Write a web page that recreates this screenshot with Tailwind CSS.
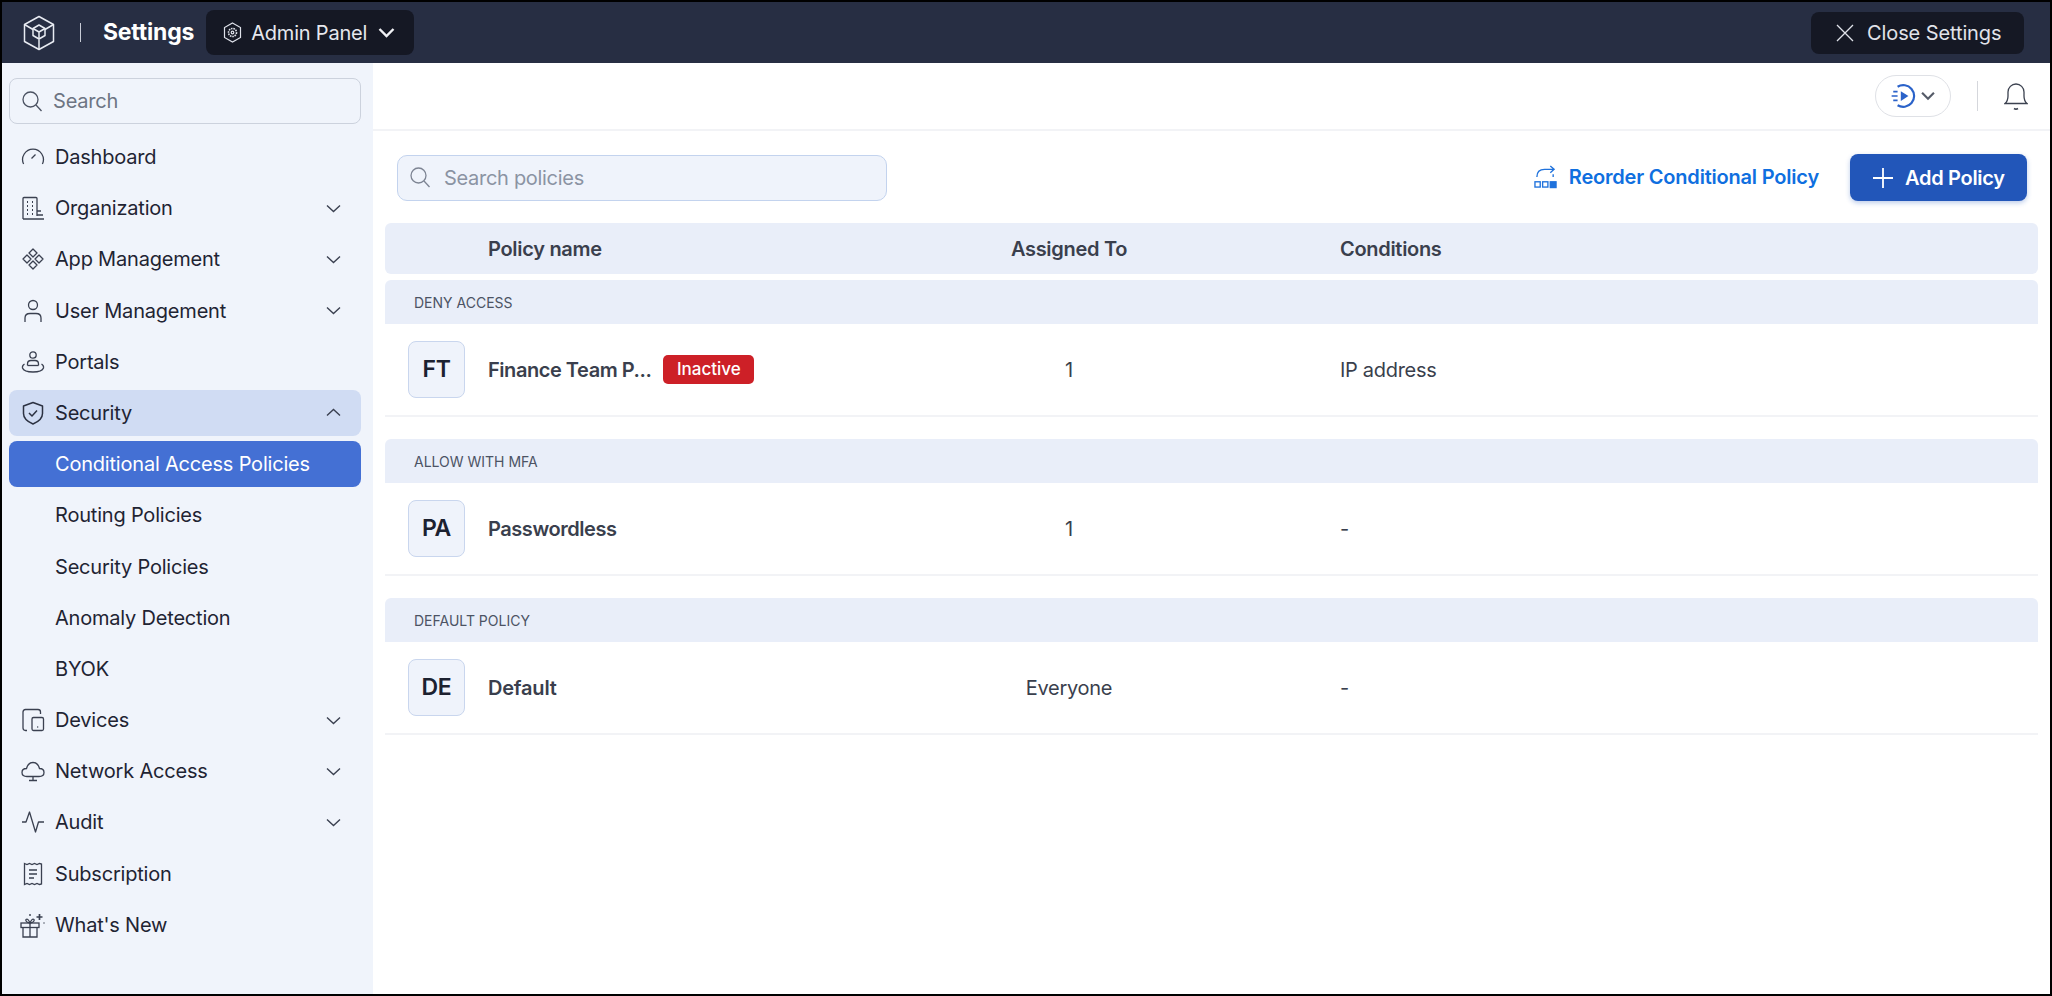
<!DOCTYPE html>
<html lang="en">
<head>
  <meta charset="UTF-8" />
  <title>Settings - Conditional Access Policies</title>
  <script src="https://cdn.jsdelivr.net/npm/@tailwindcss/browser@4"></script>
</head>
<body class="bg-black font-['Inter',sans-serif]">
  <div class="w-[2052px] h-[996px] border-2 border-black bg-white flex flex-col overflow-hidden">

    <!-- top bar -->
    <header class="h-[61px] shrink-0 bg-[#272e43] flex items-center text-white">
      <svg class="ml-[20px] w-[34px] h-[36px]" viewBox="0 0 34 36" fill="none" stroke="#e8ebf2" stroke-width="1.5" stroke-linejoin="round">
        <path d="M17 1.5 31.5 9.5V26.5L17 34.5 2.5 26.5V9.5Z"/>
        <path d="M2.5 9.5 11 14.5M31.5 9.5 23 14.5M17 34.5V24.5"/>
        <path d="M17 10 23 13.5V20.5L17 24 11 20.5V13.5Z"/>
        <path d="M11 13.5 17 17 23 13.5M17 17V24"/>
      </svg>
      <div class="ml-[24px] w-px h-[19px] bg-[#c8ccd6]"></div>
      <span class="ml-[22px] text-[23px] font-bold tracking-[-0.2px]">Settings</span>
      <button class="ml-[12px] w-[208px] h-[45px] rounded-[8px] bg-[#151824] flex items-center pl-[17px] text-[#e6e8ee]">
        <svg class="w-[19px] h-[21px]" viewBox="0 0 19 21" fill="none" stroke="#dfe2ea" stroke-width="1.2">
          <path d="M9.5 1 17.5 5.5V15.5L9.5 20 1.5 15.5V5.5Z"/>
          <circle cx="9.5" cy="10.5" r="4" stroke-dasharray="1.6 .8" stroke-width="1.6"/>
          <circle cx="9.5" cy="10.5" r="1.3"/>
        </svg>
        <span class="ml-[9px] text-[20px] tracking-[-0.2px]">Admin Panel</span>
        <svg class="ml-[11px] w-[17px] h-[11px]" viewBox="0 0 17 11" fill="none" stroke="#f0f1f5" stroke-width="2.4"><path d="M1.5 2 8.5 9 15.5 2"/></svg>
      </button>
      <button class="ml-auto mr-[26px] w-[213px] h-[42px] rounded-[8px] bg-[#151824] flex items-center pl-[25px] text-[#e1e3ea]">
        <svg class="w-[18px] h-[18px]" viewBox="0 0 18 18" fill="none" stroke="#e1e3ea" stroke-width="1.3"><path d="M1 1 17 17M17 1 1 17"/></svg>
        <span class="ml-[13px] text-[20px] tracking-[-0.1px]">Close Settings</span>
      </button>
    </header>

    <div class="flex-1 flex min-h-0">

      <!-- sidebar -->
      <aside class="w-[371px] shrink-0 bg-[#f0f4fb] pl-[7px] pr-[12px] pt-[15px]">
        <div class="h-[46px] rounded-[8px] border border-[#ccd2dd] flex items-center pl-[12px] text-[#6d7483] text-[20px] tracking-[-0.2px]">
          <svg class="w-[20px] h-[21px]" viewBox="0 0 20 21" fill="none" stroke="#4b5262" stroke-width="1.3"><circle cx="8.5" cy="8.5" r="7.5"/><path d="M14 14 19.5 20"/></svg>
          <span class="ml-[11px]">Search</span>
        </div>

        <nav class="mt-[10px] text-[20px] tracking-[-0.2px] text-[#1f2433]">
          <a class="h-[46px] mb-[5.2px] flex items-center rounded-[8px]">
            <svg class="ml-[12px] w-[24px] h-[24px] shrink-0" viewBox="0 0 24 24" fill="none" stroke="#3a4050" stroke-width="1.3"><path d="M2.6 19A10.4 10.4 0 1 1 21.4 19"/><path d="M10.5 13.5 14.5 9.5"/></svg>
            <span class="ml-[10px]">Dashboard</span>
          </a>
          <a class="h-[46px] mb-[5.2px] flex items-center rounded-[8px]">
            <svg class="ml-[12px] w-[24px] h-[24px] shrink-0" viewBox="0 0 24 24" fill="none" stroke="#3a4050" stroke-width="1.3"><path d="M2 23V2.5Q2 1.5 3 1.5H15Q16 1.5 16 2.5V20"/><path d="M2 23H23M16 15H20M16 19H22"/><path d="M6 6H7M11 6H12M6 10H7M11 10H12M6 14H7M11 14H12M6 18H7M11 18H12" stroke-width="1.8"/></svg>
            <span class="ml-[10px]">Organization</span>
            <svg class="ml-auto mr-[20px] w-[15px] h-[9px]" viewBox="0 0 15 9" fill="none" stroke="#3a4050" stroke-width="1.4"><path d="M1 1.5 7.5 7.5 14 1.5"/></svg>
          </a>
          <a class="h-[46px] mb-[5.2px] flex items-center rounded-[8px]">
            <svg class="ml-[12px] w-[24px] h-[24px] shrink-0" viewBox="0 0 24 24" fill="none" stroke="#3a4050" stroke-width="1.3" stroke-linejoin="round"><path d="M12 2 16 6 12 10 8 6Z"/><path d="M12 14 16 18 12 22 8 18Z"/><path d="M6 8 10 12 6 16 2 12Z"/><path d="M18 8 22 12 18 16 14 12Z"/></svg>
            <span class="ml-[10px]">App Management</span>
            <svg class="ml-auto mr-[20px] w-[15px] h-[9px]" viewBox="0 0 15 9" fill="none" stroke="#3a4050" stroke-width="1.4"><path d="M1 1.5 7.5 7.5 14 1.5"/></svg>
          </a>
          <a class="h-[46px] mb-[5.2px] flex items-center rounded-[8px]">
            <svg class="ml-[12px] w-[24px] h-[24px] shrink-0" viewBox="0 0 24 24" fill="none" stroke="#3a4050" stroke-width="1.3"><circle cx="12" cy="6" r="4.5"/><path d="M4 23V19Q4 14.5 9 14.5H15Q20 14.5 20 19V23"/></svg>
            <span class="ml-[10px]">User Management</span>
            <svg class="ml-auto mr-[20px] w-[15px] h-[9px]" viewBox="0 0 15 9" fill="none" stroke="#3a4050" stroke-width="1.4"><path d="M1 1.5 7.5 7.5 14 1.5"/></svg>
          </a>
          <a class="h-[46px] mb-[5.2px] flex items-center rounded-[8px]">
            <svg class="ml-[12px] w-[24px] h-[24px] shrink-0" viewBox="0 0 24 24" fill="none" stroke="#3a4050" stroke-width="1.3"><circle cx="12" cy="5" r="3.2"/><path d="M6.5 15.5V14Q6.5 10.5 10 10.5H14Q17.5 10.5 17.5 14V15.5"/><path d="M6.5 15.5H17.5"/><path d="M3.5 14Q1 15.5 1.5 18 3 22 12 22 21 22 22.5 18 23 15.5 20.5 14"/></svg>
            <span class="ml-[10px]">Portals</span>
          </a>
          <a class="h-[46px] mb-[5.2px] flex items-center rounded-[8px] bg-[#d0dcf3]">
            <svg class="ml-[12px] w-[24px] h-[24px] shrink-0" viewBox="0 0 24 24" fill="none" stroke="#2c3242" stroke-width="1.5" stroke-linejoin="round"><path d="M12 1.5 21.5 5V12.5Q21.5 19 12 23 2.5 19 2.5 12.5V5Z"/><path d="M8 12 11 15 16 9.5"/></svg>
            <span class="ml-[10px]">Security</span>
            <svg class="ml-auto mr-[20px] w-[15px] h-[9px]" viewBox="0 0 15 9" fill="none" stroke="#3a4050" stroke-width="1.4"><path d="M1 7.5 7.5 1.5 14 7.5"/></svg>
          </a>
          <a class="h-[46px] mb-[5.2px] flex items-center rounded-[8px] bg-[#4470d4] text-white pl-[46px]">Conditional Access Policies</a>
          <a class="h-[46px] mb-[5.2px] flex items-center rounded-[8px] pl-[46px]">Routing Policies</a>
          <a class="h-[46px] mb-[5.2px] flex items-center rounded-[8px] pl-[46px]">Security Policies</a>
          <a class="h-[46px] mb-[5.2px] flex items-center rounded-[8px] pl-[46px]">Anomaly Detection</a>
          <a class="h-[46px] mb-[5.2px] flex items-center rounded-[8px] pl-[46px]">BYOK</a>
          <a class="h-[46px] mb-[5.2px] flex items-center rounded-[8px]">
            <svg class="ml-[12px] w-[24px] h-[24px] shrink-0" viewBox="0 0 24 24" fill="none" stroke="#3a4050" stroke-width="1.3"><path d="M6 22.5H4.5Q2 22.5 2 20V4Q2 1.5 4.5 1.5H17Q19.5 1.5 19.5 4V6"/><rect x="11" y="9.5" width="11.5" height="13" rx="1.5"/><path d="M16.2 19H17.2" stroke-width="1.5"/></svg>
            <span class="ml-[10px]">Devices</span>
            <svg class="ml-auto mr-[20px] w-[15px] h-[9px]" viewBox="0 0 15 9" fill="none" stroke="#3a4050" stroke-width="1.4"><path d="M1 1.5 7.5 7.5 14 1.5"/></svg>
          </a>
          <a class="h-[46px] mb-[5.2px] flex items-center rounded-[8px]">
            <svg class="ml-[12px] w-[24px] h-[24px] shrink-0" viewBox="0 0 24 24" fill="none" stroke="#3a4050" stroke-width="1.3"><path d="M6 17.5Q1 17.5 1 13.5 1 9.5 5.5 9.5 7 3.5 12 3.5 17 3.5 18.5 9.5 23 9.5 23 13.5 23 17.5 18 17.5Z"/><path d="M12 17.5V21M8 21.5H16"/></svg>
            <span class="ml-[10px]">Network Access</span>
            <svg class="ml-auto mr-[20px] w-[15px] h-[9px]" viewBox="0 0 15 9" fill="none" stroke="#3a4050" stroke-width="1.4"><path d="M1 1.5 7.5 7.5 14 1.5"/></svg>
          </a>
          <a class="h-[46px] mb-[5.2px] flex items-center rounded-[8px]">
            <svg class="ml-[12px] w-[24px] h-[24px] shrink-0" viewBox="0 0 24 24" fill="none" stroke="#3a4050" stroke-width="1.3" stroke-linejoin="round"><path d="M1 12 5 12 8.5 2 14.5 22 17.5 12H23"/></svg>
            <span class="ml-[10px]">Audit</span>
            <svg class="ml-auto mr-[20px] w-[15px] h-[9px]" viewBox="0 0 15 9" fill="none" stroke="#3a4050" stroke-width="1.4"><path d="M1 1.5 7.5 7.5 14 1.5"/></svg>
          </a>
          <a class="h-[46px] mb-[5.2px] flex items-center rounded-[8px]">
            <svg class="ml-[12px] w-[24px] h-[24px] shrink-0" viewBox="0 0 24 24" fill="none" stroke="#3a4050" stroke-width="1.3"><path d="M3.5 1.5 6 2.5 8.5 1.5 11 2.5 13.5 1.5 16 2.5 18.5 1.5 20.5 2V22L18.5 22.5 16 21.5 13.5 22.5 11 21.5 8.5 22.5 6 21.5 3.5 22.5Z"/><path d="M8 8H16M8 12H16M8 16H13"/></svg>
            <span class="ml-[10px]">Subscription</span>
          </a>
          <a class="h-[46px] flex items-center rounded-[8px]">
            <svg class="ml-[10px] w-[26px] h-[26px] shrink-0" viewBox="0 0 26 26" fill="none" stroke="#3a4050" stroke-width="1.3"><rect x="2" y="11" width="18" height="4.5"/><path d="M4 15.5V25H18V15.5M11 11V25"/><path d="M11 11Q6 10 7 7.5 9 6 11 11 13 6 15 7.5 16 10 11 11"/><path d="M20.5 2V8M17.5 5H23.5" stroke-width="1.7"/><path d="M11 2V4M24.5 11H25.5" stroke-width="1.4"/></svg>
            <span class="ml-[10px]">What's New</span>
          </a>
        </nav>
      </aside>

      <!-- main -->
      <main class="flex-1 min-w-0 flex flex-col">
        <div class="h-[68px] shrink-0 border-b-2 border-[#f2f3f6] flex items-center justify-end">
          <div class="w-[76px] h-[42px] rounded-full border border-[#dfe1e6] flex items-center pl-[14px]">
            <svg class="w-[26px] h-[26px]" viewBox="0 0 24 24" fill="none" stroke="#2a62c9" stroke-width="2"><path d="M7 3.5A10 10 0 1 1 7 20.5"/><path d="M10 7.5 17 12 10 16.5Z" fill="#2a62c9" stroke="none"/><path d="M3 8H7M1.5 12H7M3 16H7" stroke-width="1.6"/></svg>
            <svg class="ml-[5px] w-[14px] h-[10px]" viewBox="0 0 13 9" fill="none" stroke="#555b68" stroke-width="2"><path d="M1 1.5 6.5 7 12 1.5"/></svg>
          </div>
          <div class="ml-[26px] w-px h-[30px] bg-[#d5d7dc]"></div>
          <svg class="ml-[26px] mr-[22px] w-[24px] h-[29px]" viewBox="0 0 24 29" fill="none" stroke="#3c4250" stroke-width="1.3"><path d="M1 21.5Q4 19 4 14V10A8 8 0 0 1 20 10V14Q20 19 23 21.5Z"/><path d="M10 26.5Q12 27.8 14 26.5" stroke-width="1.6"/></svg>
        </div>

        <div class="flex items-center pl-[24px] pr-[23px] pt-[23px]">
          <div class="w-[490px] h-[46px] rounded-[10px] border border-[#c3d3ee] bg-[#eff3fb] flex items-center pl-[12px] text-[20px] tracking-[-0.3px] text-[#8b93a3]">
            <svg class="w-[20px] h-[21px]" viewBox="0 0 20 21" fill="none" stroke="#7d8493" stroke-width="1.3"><circle cx="8.5" cy="8.5" r="7.5"/><path d="M14 14 19.5 20"/></svg>
            <span class="ml-[14px]">Search policies</span>
          </div>
          <svg class="ml-auto w-[23px] h-[24px] -mt-px" viewBox="0 0 24 24" fill="none" stroke="#1f72dc" stroke-width="1.4">
            <path d="M3 12Q3 4 11 4H21M17 .5 21 4 17 7.5M20 9V12"/>
            <rect x="1" y="17" width="5.5" height="5.5"/><rect x="9" y="17" width="5.5" height="5.5"/><rect x="17" y="17" width="6" height="6" fill="#1f72dc"/>
          </svg>
          <span class="ml-[12px] -mt-[2px] text-[20px] tracking-[-0.2px] font-semibold text-[#0f6fe0]">Reorder Conditional Policy</span>
          <button class="ml-[31px] w-[177px] h-[47px] rounded-[8px] bg-[#2256b9] shadow-[0_2px_5px_rgba(34,86,185,0.3)] flex items-center pl-[23px] text-white text-[20px] tracking-[-0.3px] font-semibold">
            <svg class="w-[20px] h-[20px]" viewBox="0 0 20 20" fill="none" stroke="#fff" stroke-width="1.8"><path d="M10 0V20M0 10H20"/></svg>
            <span class="ml-[12px]">Add Policy</span>
          </button>
        </div>

        <!-- policy table -->
        <div class="mx-[12px] mt-[22px] text-[20px] tracking-[-0.3px]">
          <div class="h-[51px] rounded-[6px] bg-[#e9eef9] grid grid-cols-[103px_453px_256px_1fr] items-center font-semibold text-[#3a3f4d]">
            <div></div>
            <div>Policy name</div>
            <div class="text-center">Assigned To</div>
            <div class="pl-[143px]">Conditions</div>
          </div>

          <div class="mt-[6px] h-[44px] rounded-t-[6px] bg-[#e9eef9] flex items-center pl-[29px] text-[14px] tracking-normal text-[#4c5364]">DENY ACCESS</div>
          <div class="h-[93px] border-b-2 border-[#f2f3f6] grid grid-cols-[103px_453px_256px_1fr] items-center text-[#3a3f4d]">
            <div class="ml-[23px] w-[57px] h-[57px] rounded-[8px] border border-[#c9d6ee] bg-[#eff3fb] flex items-center justify-center text-[23px] font-semibold text-[#1c2130]">FT</div>
            <div class="flex items-center">
              <span class="font-semibold tracking-[-0.45px]">Finance Team P...</span>
              <span class="ml-[12px] w-[91px] h-[29px] rounded-[5px] bg-[#cd2027] flex items-center justify-center text-[17px] font-medium tracking-normal text-white">Inactive</span>
            </div>
            <div class="text-center">1</div>
            <div class="pl-[143px]">IP address</div>
          </div>

          <div class="mt-[22px] h-[44px] rounded-t-[6px] bg-[#e9eef9] flex items-center pl-[29px] text-[14px] tracking-normal text-[#4c5364]">ALLOW WITH MFA</div>
          <div class="h-[93px] border-b-2 border-[#f2f3f6] grid grid-cols-[103px_453px_256px_1fr] items-center text-[#3a3f4d]">
            <div class="ml-[23px] w-[57px] h-[57px] rounded-[8px] border border-[#c9d6ee] bg-[#eff3fb] flex items-center justify-center text-[23px] font-semibold text-[#1c2130]">PA</div>
            <div class="font-semibold tracking-[-0.45px]">Passwordless</div>
            <div class="text-center">1</div>
            <div class="pl-[143px]">-</div>
          </div>

          <div class="mt-[22px] h-[44px] rounded-t-[6px] bg-[#e9eef9] flex items-center pl-[29px] text-[14px] tracking-normal text-[#4c5364]">DEFAULT POLICY</div>
          <div class="h-[93px] border-b-2 border-[#f2f3f6] grid grid-cols-[103px_453px_256px_1fr] items-center text-[#3a3f4d]">
            <div class="ml-[23px] w-[57px] h-[57px] rounded-[8px] border border-[#c9d6ee] bg-[#eff3fb] flex items-center justify-center text-[23px] font-semibold text-[#1c2130]">DE</div>
            <div class="font-semibold tracking-[-0.2px]">Default</div>
            <div class="text-center">Everyone</div>
            <div class="pl-[143px]">-</div>
          </div>
        </div>
      </main>
    </div>
  </div>
</body>
</html>
